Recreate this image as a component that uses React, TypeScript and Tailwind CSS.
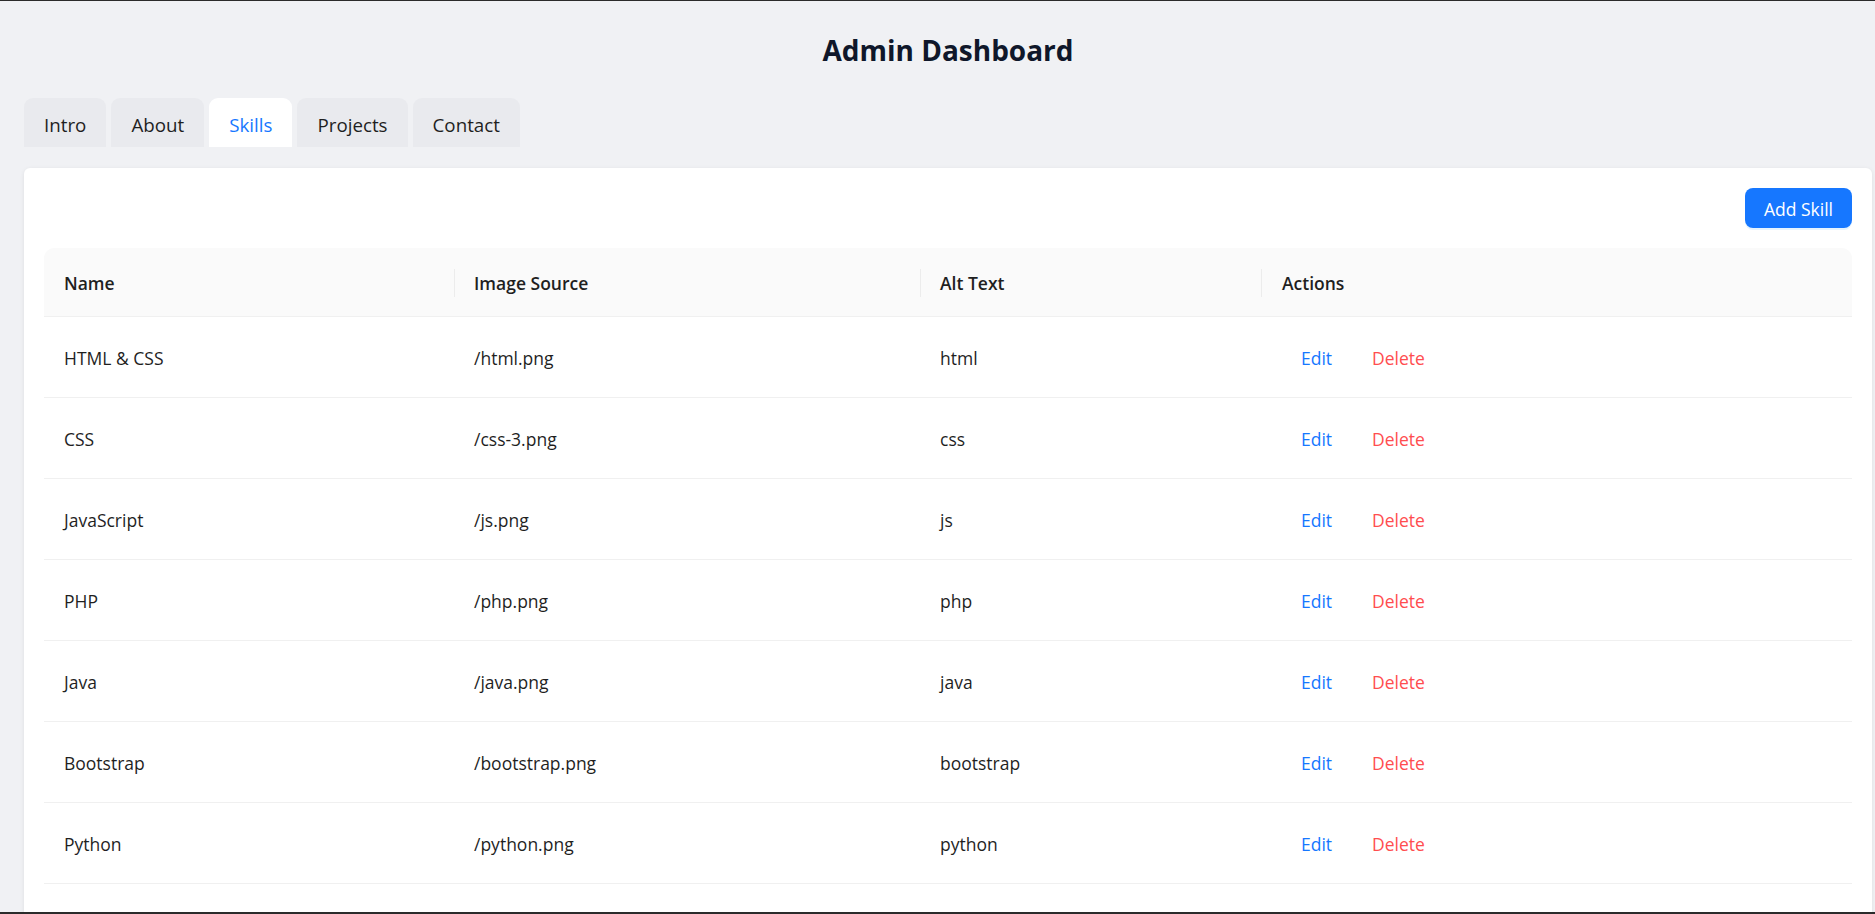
import { useState } from "react";

type Skill = {
  name: string;
  src: string;
  alt: string;
};

const skills: Skill[] = [
  { name: "HTML & CSS", src: "/html.png", alt: "html" },
  { name: "CSS", src: "/css-3.png", alt: "css" },
  { name: "JavaScript", src: "/js.png", alt: "js" },
  { name: "PHP", src: "/php.png", alt: "php" },
  { name: "Java", src: "/java.png", alt: "java" },
  { name: "Bootstrap", src: "/bootstrap.png", alt: "bootstrap" },
  { name: "Python", src: "/python.png", alt: "python" },
];

const tabs = ["Intro", "About", "Skills", "Projects", "Contact"];

function HeaderCell({ label, divider }: { label: string; divider?: boolean }) {
  return (
    <th className="p-0 pt-[2px] text-left font-semibold">
      <div className="flex items-center">
        {divider ? (
          <span className="h-7 w-px bg-[#ececec]" />
        ) : (
          <span className="w-px" />
        )}
        <span className="pl-[19px]">{label}</span>
      </div>
    </th>
  );
}

export default function App() {
  const [activeTab, setActiveTab] = useState("Skills");

  return (
    <div className="h-[914px] overflow-hidden border-t border-b-2 border-[#2b2b2b] bg-[#f0f1f4] font-['Open_Sans',sans-serif] text-[17.5px] text-[#1f1f1f]">
      <div className="pl-6 pr-[3px] pt-[29px]">
        <h1 className="text-center text-[28px] font-bold leading-[40px] text-[#0f172a]">
          Admin Dashboard
        </h1>

        {/* Tabs */}
        <div className="mt-[28px] mb-[21px] flex gap-[5px]">
          {tabs.map((tab) => (
            <button
              key={tab}
              type="button"
              onClick={() => setActiveTab(tab)}
              className={`h-[49px] rounded-t-[9px] px-5 pt-1 text-[18.75px] leading-[27.5px] ${
                activeTab === tab
                  ? "bg-white text-[#1677ff]"
                  : "bg-[#e9eaee] text-[#1f1f1f]"
              }`}
            >
              {tab}
            </button>
          ))}
        </div>

        {/* Card */}
        <div className="min-h-[760px] rounded-md bg-white p-5 shadow-[0_1px_4px_rgba(0,0,0,0.08)]">
          <div className="mb-5 flex justify-end">
            <button
              type="button"
              className="h-10 w-[107px] rounded-lg bg-[#1677ff] pt-[2px] text-white shadow-[0_2px_0_rgba(5,145,255,0.1)]"
            >
              Add Skill
            </button>
          </div>

          <table className="w-full table-fixed border-collapse">
            <colgroup>
              <col className="w-[410px]" />
              <col className="w-[466px]" />
              <col className="w-[341px]" />
              <col />
            </colgroup>
            <thead>
              <tr className="h-[68px] border-b border-[#f0f0f0] bg-[#fafafa]">
                <th className="rounded-tl-[10px] p-0 pt-[2px] pl-5 text-left font-semibold">
                  Name
                </th>
                <HeaderCell label="Image Source" divider />
                <HeaderCell label="Alt Text" divider />
                <th className="rounded-tr-[10px] p-0 pt-[2px] text-left font-semibold">
                  <div className="flex items-center">
                    <span className="h-7 w-px bg-[#ececec]" />
                    <span className="pl-[20px]">Actions</span>
                  </div>
                </th>
              </tr>
            </thead>
            <tbody>
              {skills.map((skill) => (
                <tr key={skill.name} className="h-[81px] border-b border-[#f0f0f0]">
                  <td className="px-5 pt-1 align-middle">{skill.name}</td>
                  <td className="px-5 pt-1 align-middle">{skill.src}</td>
                  <td className="px-5 pt-1 align-middle">{skill.alt}</td>
                  <td className="px-5 align-middle">
                    <div className="flex items-center">
                      <button
                        type="button"
                        className="h-10 rounded-lg px-5 pt-1 text-[#1677ff]"
                      >
                        Edit
                      </button>
                      <button
                        type="button"
                        className="h-10 rounded-lg px-5 pt-1 text-[#ff4d4f]"
                      >
                        Delete
                      </button>
                    </div>
                  </td>
                </tr>
              ))}
            </tbody>
          </table>
        </div>
      </div>
    </div>
  );
}
